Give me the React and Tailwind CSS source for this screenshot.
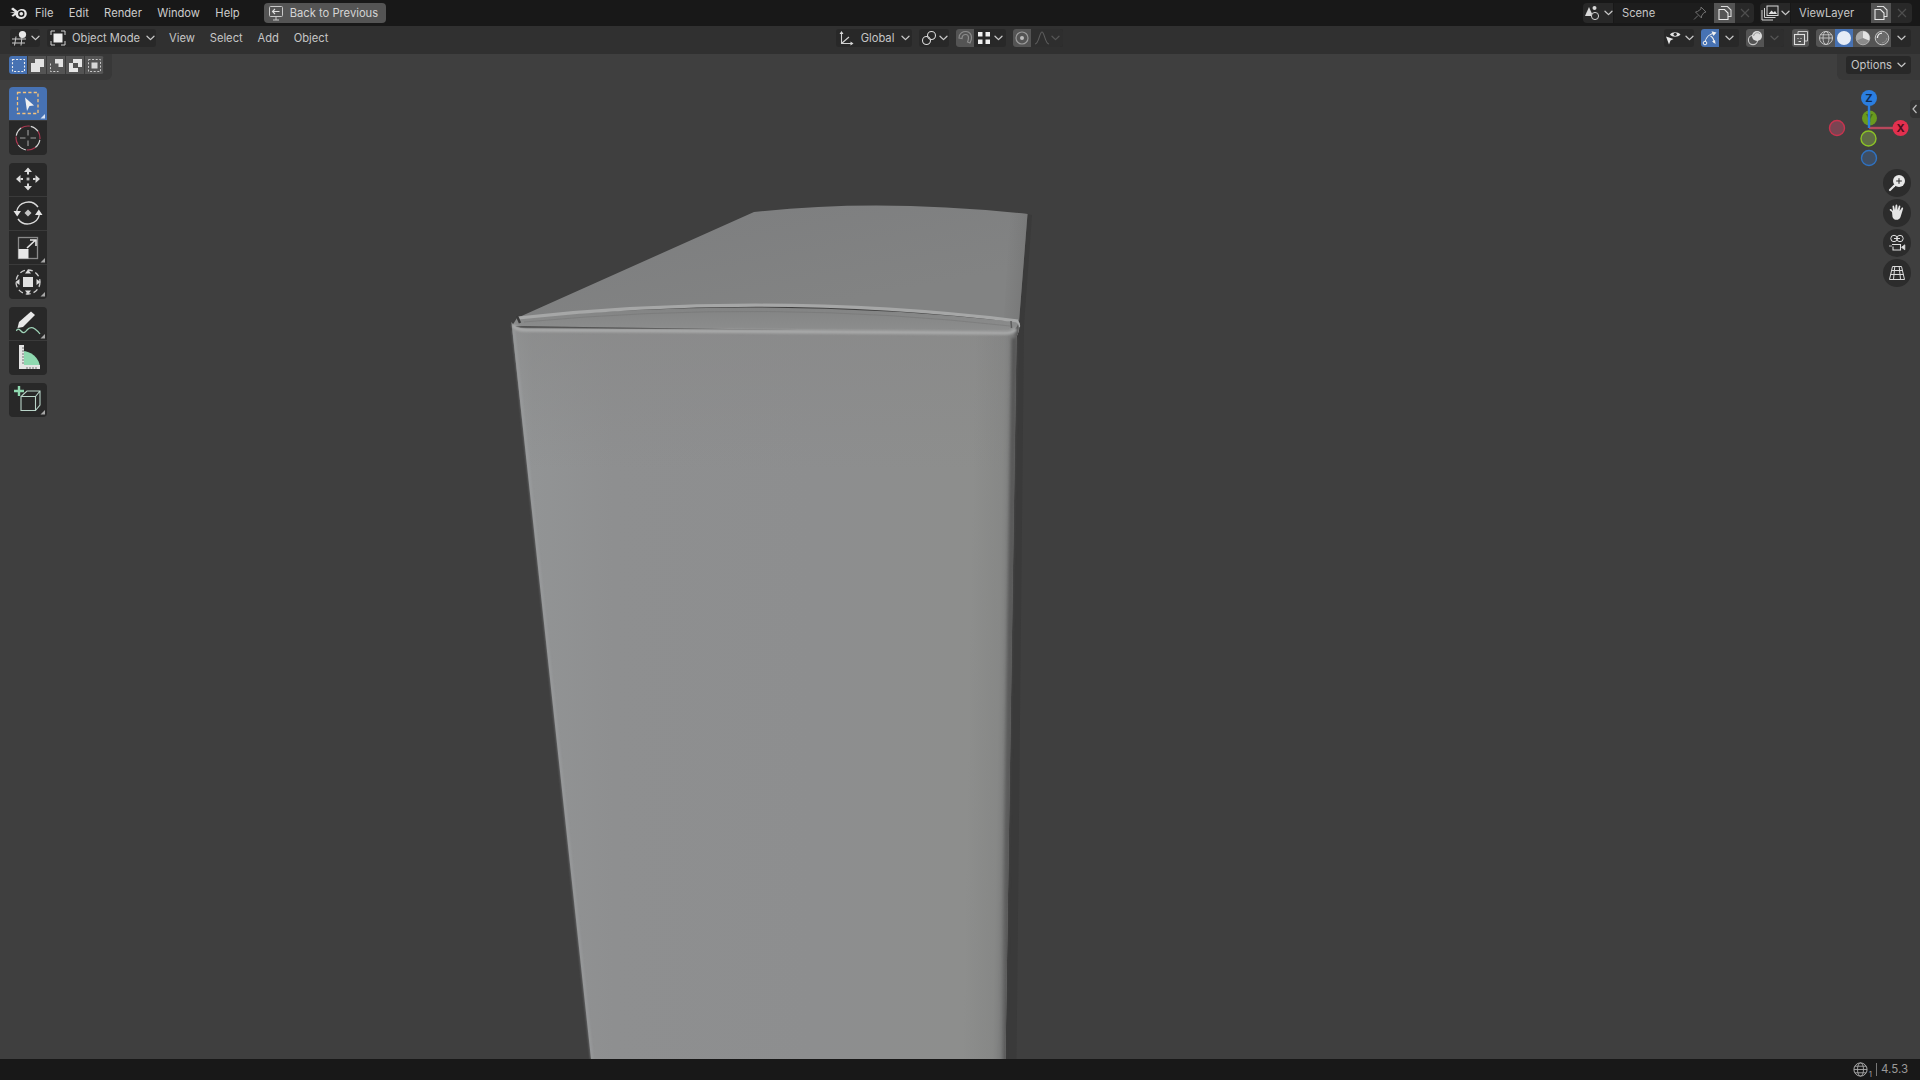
import React from "react";

const Chev = ({ c = "#c8c8c8", className = "" }) => (
  <svg width="9" height="6" viewBox="0 0 9 6" className={`shrink-0 ${className}`}>
    <path d="M1 1.2 L4.5 4.6 L8 1.2" fill="none" stroke={c} strokeWidth="1.3" strokeLinecap="round" strokeLinejoin="round" />
  </svg>
);

const T = ({ children }) => <span className="pt-[2px]">{children}</span>;

const Ic = ({ w = 16, h = 16, children }) => (
  <svg width={w} height={h} viewBox={`0 0 ${w} ${h}`} className="shrink-0">{children}</svg>
);

const BlenderLogo = () => (
  <Ic w={18} h={14}>
    <path d="M0.8 6.2 L6 6.2 L2 3 L4 1.6 L8.6 5 C10 3.6 11.6 3 13 3 C15.8 3 17.8 5 17.8 7.6 C17.8 10.6 15.4 13 12.2 13 C9.2 13 7 11.4 6.4 9 L4 10.8 L2.4 9.6 L5.4 7.4 Z" fill="#e6e6e6" />
    <circle cx="12.3" cy="7.8" r="3.2" fill="#181818" />
    <circle cx="12.3" cy="7.8" r="1.8" fill="#e6e6e6" />
  </Ic>
);

const BackIcon = () => (
  <Ic w={16} h={16}>
    <rect x="1.5" y="1.5" width="13" height="10" rx="1" fill="none" stroke="#c8c8c8" strokeWidth="1" />
    <path d="M5 15 H11 M8 11.5 V15" stroke="#c8c8c8" strokeWidth="1" />
    <path d="M11.5 6.5 H4.5 M7 4 L4.5 6.5 L7 9" fill="none" stroke="#e0e0e0" strokeWidth="1.1" />
  </Ic>
);

const EditorIcon = () => (
  <Ic w={18} h={16}>
    <path d="M1 9 H15 M1 13 H14 M5 6.5 L3.5 15.5 M11 7 L10 15.5" stroke="#c8c8c8" strokeWidth="1" />
    <circle cx="11.5" cy="4.5" r="3.6" fill="#e8e8e8" />
  </Ic>
);

const ModeIcon = () => (
  <Ic w={16} h={16}>
    <path d="M1 5 V1 H5 M11 1 H15 V5 M15 11 V15 H11 M5 15 H1 V11" fill="none" stroke="#d0d0d0" strokeWidth="1" />
    <rect x="3.5" y="3.5" width="9" height="9" fill="#eeeeee" />
  </Ic>
);

const GlobalIcon = () => (
  <Ic w={16} h={16}>
    <path d="M3.5 2.5 V13.5 H14 M3.5 13.5 L11 7" fill="none" stroke="#d0d0d0" strokeWidth="1.1" />
    <path d="M1.5 4 L3.5 1 L5.5 4 Z M12.5 11.5 L15.5 13.5 L12.5 15.5 Z" fill="#d8d8d8" />
  </Ic>
);

const LinkIcon = () => (
  <Ic w={16} h={16}>
    <circle cx="5.5" cy="10.5" r="4" fill="none" stroke="#d8d8d8" strokeWidth="1.1" />
    <circle cx="10.5" cy="5.5" r="4" fill="none" stroke="#d8d8d8" strokeWidth="1.1" />
  </Ic>
);

const MagnetIcon = () => (
  <Ic w={16} h={16}>
    <path d="M2 8 C2 3 6 1.5 9 1.5 C12.5 1.5 14.5 4.5 14.5 7.5 C14.5 9.5 14 11 13 13 L10.5 12 C11.2 10.5 11.5 9 11.5 7.5 C11.5 5.8 10.5 4.5 8.8 4.5 C6.5 4.5 5 6 5 8.5 Z" fill="none" stroke="#8c8c8c" strokeWidth="1.2" />
  </Ic>
);

const SnapIcon = () => (
  <Ic w={14} h={14}>
    <rect x="1" y="1" width="4.5" height="4.5" fill="#f0f0f0" />
    <rect x="8.5" y="1" width="4.5" height="4.5" fill="#f0f0f0" />
    <rect x="1" y="8.5" width="4.5" height="4.5" fill="#f0f0f0" />
    <rect x="8.5" y="8.5" width="4.5" height="4.5" fill="#f0f0f0" />
  </Ic>
);

const PropIcon = () => (
  <Ic w={16} h={16}>
    <circle cx="8" cy="8" r="6" fill="none" stroke="#9a9a9a" strokeWidth="1.2" />
    <circle cx="8" cy="8" r="2" fill="#bdbdbd" />
  </Ic>
);

const FalloffIcon = () => (
  <Ic w={16} h={16}>
    <path d="M1 14 C5 14 5.5 2 8 2 C10.5 2 11 14 15 14" fill="none" stroke="#5c5c5c" strokeWidth="1.1" />
  </Ic>
);

const SceneIcon = () => (
  <Ic w={18} h={16}>
    <path d="M5 2 L9 11 H1 Z" fill="#d8d8d8" />
    <circle cx="10.5" cy="3" r="2" fill="#d8d8d8" />
    <circle cx="11" cy="11" r="3.6" fill="#2a2a2a" stroke="#d0d0d0" strokeWidth="1" />
  </Ic>
);

const PinIcon = () => (
  <Ic w={14} h={14}>
    <path d="M8 1 L13 6 L11 6.5 L8.5 10 L8.5 12 L2.5 6 L4.5 5.5 L8 3 Z M5 9.5 L1 13.5" fill="none" stroke="#6f6f6f" strokeWidth="1" />
  </Ic>
);

const CopyIcon = () => (
  <Ic w={16} h={16}>
    <path d="M4.5 2 V1.5 H10.5 L14 5 V11.5 H11" fill="none" stroke="#dcdcdc" strokeWidth="1.1" />
    <path d="M2 4.5 H7.5 L11 8 V14.5 H2 Z" fill="none" stroke="#e8e8e8" strokeWidth="1.1" />
  </Ic>
);

const XIcon = () => (
  <Ic w={12} h={12}>
    <path d="M2 2 L10 10 M10 2 L2 10" stroke="#4e4e4e" strokeWidth="1.2" />
  </Ic>
);

const LayerIcon = () => (
  <Ic w={18} h={16}>
    <path d="M1 5 V15 H12 M3.5 3 V12.5 H14.5" fill="none" stroke="#d0d0d0" strokeWidth="1" />
    <rect x="6" y="1" width="11" height="9.5" fill="#2a2a2a" stroke="#d8d8d8" strokeWidth="1" />
    <path d="M7.5 9 L10.5 5.5 L12.5 7.5 L14 6 L16 9 Z" fill="#e0e0e0" />
  </Ic>
);

const EyeIcon = () => (
  <Ic w={20} h={16}>
    <path d="M6 4.5 C8 1.5 14 1.5 16.5 4.5 C14 7.5 8 7.5 6 4.5 Z" fill="#e4e4e4" />
    <circle cx="11.2" cy="4.3" r="1.6" fill="#2a2a2a" />
    <path d="M2 6.5 L9.5 9 L6.5 10.5 L5 14.5 Z" fill="#e8e8e8" />
  </Ic>
);

const GizmoToggleIcon = () => (
  <Ic w={16} h={16}>
    <path d="M3 12 C4 7 8 3.5 13 3.2" fill="none" stroke="#f0f0f0" strokeWidth="1.1" />
    <path d="M12 12.5 C12 9.5 11 7.5 8.5 6" fill="none" stroke="#f0f0f0" strokeWidth="1.1" />
    <circle cx="3" cy="13" r="1.8" fill="none" stroke="#f0f0f0" strokeWidth="1" />
    <path d="M9.5 1.2 L14.5 2.5 L11.5 6 Z M13 10 L10 11.5 L13.5 14 Z" fill="#f0f0f0" />
  </Ic>
);

const OverlayIcon = () => (
  <Ic w={16} h={16}>
    <circle cx="6" cy="10" r="4.6" fill="none" stroke="#c8c8c8" strokeWidth="1.1" />
    <circle cx="10" cy="6" r="5" fill="#dcdcdc" />
    <path d="M6.6 6 A3.6 3.6 0 0 1 13 4" fill="none" stroke="#888" strokeWidth="0.8" />
  </Ic>
);

const XrayIcon = () => (
  <Ic w={16} h={16}>
    <path d="M5 4 V1.5 H14.5 V11 H12" fill="none" stroke="#c8c8c8" strokeWidth="1" />
    <rect x="1.5" y="4.5" width="10" height="10" fill="none" stroke="#e0e0e0" strokeWidth="1.1" />
    <path d="M5 8 V9 M8 8 V9 M5.5 11.5 H8" stroke="#e0e0e0" strokeWidth="1" />
  </Ic>
);

const WireIcon = () => (
  <Ic w={16} h={16}>
    <circle cx="8" cy="8" r="6.5" fill="none" stroke="#c8c8c8" strokeWidth="1" />
    <ellipse cx="8" cy="8" rx="3" ry="6.5" fill="none" stroke="#c8c8c8" strokeWidth="0.9" />
    <path d="M1.5 8 H14.5 M2.6 4.8 H13.4" stroke="#c8c8c8" strokeWidth="0.9" />
  </Ic>
);

const SolidIcon = () => (
  <Ic w={16} h={16}>
    <circle cx="8" cy="8" r="7" fill="#e6ecf6" />
  </Ic>
);

const MatIcon = () => (
  <Ic w={16} h={16}>
    <circle cx="8" cy="8" r="6.8" fill="#8a8a8a" stroke="#bdbdbd" strokeWidth="0.8" />
    <path d="M8 1.2 V8 L14 10.6 A6.8 6.8 0 0 0 8 1.2 Z" fill="#e4e4e4" />
    <path d="M8 1.2 A6.8 6.8 0 0 0 1.8 10.6 L8 8 Z" fill="#a8a8a8" />
  </Ic>
);

const RenderIcon = () => (
  <Ic w={16} h={16}>
    <circle cx="8" cy="8" r="6.8" fill="#6a6a6a" stroke="#c4c4c4" strokeWidth="1" />
    <path d="M3.4 8 A4.8 4.8 0 0 1 8 3.2 M5 5" fill="none" stroke="#f0f0f0" strokeWidth="1.3" />
    <path d="M12.8 8 A4.8 4.8 0 0 1 8 12.8" fill="none" stroke="#8d8d8d" strokeWidth="1" />
  </Ic>
);

const Box = ({ w, className = "", children }) => (
  <div className={`h-[18px] flex items-center justify-center whitespace-nowrap ${w} ${className}`}>{children}</div>
);

const Seg = ({ children, className = "" }) => (
  <div className={`flex h-[18px] rounded-[3px] overflow-hidden bg-[#282828] ${className}`}>{children}</div>
);

const SelMode = ({ children, active }) => (
  <div className={`w-[19px] h-[18px] flex items-center justify-center ${active ? "bg-[#4772b3]" : "bg-[#545454]"} border-r border-[#3a3a3a]`}>
    <Ic w={15} h={15}>{children}</Ic>
  </div>
);

const Dash = "#ededed";

const SelectModes = () => (
  <div className="flex rounded-[3px] overflow-hidden w-fit">
    <SelMode active><rect x="1.5" y="1.5" width="12" height="12" fill="none" stroke={Dash} strokeWidth="1.1" strokeDasharray="2 1.6" /></SelMode>
    <SelMode><path d="M5 1 H14 V9 H10 V14 H1 V5 H5 Z" fill="#e2e2e2" /></SelMode>
    <SelMode>
      <path d="M6 1 H14 V9 H9.5 V5.5 H6 Z" fill="#e2e2e2" />
      <path d="M1.5 5.5 V13.5 H9.5" fill="none" stroke="#d0d0d0" strokeWidth="1" strokeDasharray="2 1.6" />
    </SelMode>
    <SelMode>
      <path d="M5 1 H14 V9 H10 V5 H5 Z M1 5 H5 V10 H10 V14 H1 Z" fill="#e6e6e6" />
    </SelMode>
    <SelMode>
      <rect x="1.5" y="1.5" width="12" height="12" fill="none" stroke="#c8c8c8" strokeWidth="1" strokeDasharray="2 1.6" />
      <rect x="4.5" y="4.5" width="6" height="6" fill="#d8d8d8" />
    </SelMode>
  </div>
);

const Corner = () => <path d="M36 27 V31.5 H31.5 Z" fill="#a8a8a8" />;

const Tool = ({ active, rounded = "", dy = 0, children }) => (
  <div className={`w-[38px] h-[34px] ${active ? "bg-[#4772b3]" : "bg-[#282828]"} ${rounded} border-b border-[#3a3a3a] last:border-b-0`}>
    <svg width="38" height="33" viewBox="0 0 38 33" className="block overflow-visible">
      <g transform={`translate(0,${dy})`}>{children}</g>
    </svg>
  </div>
);

const GREEN = "#8fd9b0";

const Toolbar = () => (
  <div className="absolute left-[9px] top-[33px] flex flex-col gap-[8px]">
    <div className="flex flex-col">
      <Tool active rounded="rounded-t-[4px]">
        <rect x="8.5" y="5.5" width="20.5" height="21" fill="none" stroke="#f4c27c" strokeWidth="1.3" strokeDasharray="3.2 2.2" />
        <path d="M16 10.5 L25 18.5 L20.5 19 L18 24 Z" fill="#f0f0f0" />
        <path d="M36 27 V31.5 H31.5 Z" fill="#d8e2f2" />
      </Tool>
      <Tool rounded="rounded-b-[4px]">
        <circle cx="19" cy="17" r="12" fill="none" stroke="#d8d8d8" strokeWidth="1.2" strokeDasharray="9 10" strokeDashoffset="-2" />
        <circle cx="19" cy="17" r="12" fill="none" stroke="#a83850" strokeWidth="1.2" strokeDasharray="9 10" strokeDashoffset="-11" />
        <path d="M19 9 V14.5 M19 19.5 V25 M11 17 H16.5 M21.5 17 H27" stroke="#a0a0a0" strokeWidth="1.1" />
      </Tool>
    </div>
    <div className="flex flex-col">
      <Tool rounded="rounded-t-[4px]" dy={-1}>
        <path d="M19 5.5 L23 10 H15 Z M19 28.5 L23 24 H15 Z M7 17 L11.5 13 V21 Z M31 17 L26.5 13 V21 Z" fill="#dcdcdc" />
        <path d="M19 10 V12.5 M19 21.5 V24 M11.5 17 H14 M24 17 H26.5" stroke="#dcdcdc" strokeWidth="2" />
        <rect x="17.6" y="15.6" width="2.8" height="2.8" fill="#b8b8b8" />
      </Tool>
      <Tool dy={-1}>
        <path d="M7.5 16 A12 12 0 0 1 29 11" fill="none" stroke="#dcdcdc" strokeWidth="1.4" />
        <path d="M30.5 18 A12 12 0 0 1 9 23" fill="none" stroke="#dcdcdc" strokeWidth="1.4" />
        <path d="M4.5 15 H12 L8.2 20.5 Z M26 19 H33.5 L29.8 13.5 Z" fill="#e4e4e4" />
        <path d="M19 13.5 L22.5 17 L19 20.5 L15.5 17 Z" fill="#c4c4c4" />
      </Tool>
      <Tool>
        <rect x="9.5" y="6.5" width="19" height="21" fill="none" stroke="#8a8a8a" strokeWidth="1.3" />
        <rect x="9.5" y="18" width="10" height="9.5" fill="#e8e8e8" />
        <path d="M18 17 L26 9.5 M21 9 H27 V15" fill="none" stroke="#e4e4e4" strokeWidth="1.6" />
        <Corner />
      </Tool>
      <Tool rounded="rounded-b-[4px]">
        <circle cx="19" cy="17" r="12" fill="none" stroke="#cfcfcf" strokeWidth="1.3" strokeDasharray="5 3" />
        <rect x="14" y="12" width="10" height="10" fill="#e0e0e0" />
        <path d="M19 4.5 L22 8.5 H16 Z M19 29.5 L22 25.5 H16 Z M6.5 17 L10.5 14 V20 Z M31.5 17 L27.5 14 V20 Z" fill="#dcdcdc" />
        <Corner />
      </Tool>
    </div>
    <div className="flex flex-col">
      <Tool rounded="rounded-t-[4px]">
        <path d="M10 15 L22 4.5 L26 8 L14 20 L8.5 21 Z" fill="#e8e8e8" />
        <path d="M7.5 24 C8 21.5 10 21.5 12 24 C14 26.5 16 26 18 23 C20 20.5 23 20 26 22 C28 23.5 30 25.5 31 27" fill="none" stroke="#9fd4b8" strokeWidth="1.3" />
        <Corner />
      </Tool>
      <Tool rounded="rounded-b-[4px]" dy={-1}>
        <path d="M13 11 A18 18 0 0 1 31 27 H13 Z" fill={GREEN} />
        <rect x="10" y="5" width="5" height="24" fill="#e4e4e4" />
        <rect x="10" y="25" width="21" height="4" fill="#e4e4e4" />
        <path d="M13 8 H15 M13 11 H15 M13 14 H15 M13 17 H15 M13 20 H15 M13 23 H15" stroke="#555" strokeWidth="0.8" />
        <path d="M18 27 V29 M21 27 V29 M24 27 V29 M27 27 V29" stroke="#555" strokeWidth="0.8" />
      </Tool>
    </div>
    <div className="flex flex-col">
      <Tool rounded="rounded-[4px]">
        <path d="M10 3 V13 M5 8 H15" stroke={GREEN} strokeWidth="2.4" />
        <path d="M12 13.5 H26.5 V27.5 H12 Z M12.5 13 L18 8 H31 V22 L26.5 27.5 M26.5 13.5 L31 8" fill="none" stroke="#b9d4c8" strokeWidth="1.1" />
        <Corner />
      </Tool>
    </div>
  </div>
);

const NavBtn = ({ children }) => (
  <div className="w-[28px] h-[28px] rounded-full bg-[#2c2c2c] flex items-center justify-center">
    <Ic w={18} h={18}>{children}</Ic>
  </div>
);

const NavGizmo = () => (
  <div className="absolute left-[1883px] top-[115px] flex flex-col gap-[2px]">
    <NavBtn>
      <circle cx="11" cy="7" r="6" fill="#e8e8e8" />
      <path d="M8.2 7 H13.8 M11 4.2 V9.8" stroke="#2c2c2c" strokeWidth="1.1" />
      <path d="M6.5 11.5 L2 16" stroke="#e8e8e8" strokeWidth="2.2" strokeLinecap="round" />
    </NavBtn>
    <NavBtn>
      <path d="M4 8 L2 6.5 C1 5.5 2.5 4.5 3.5 5.5 L5 7 L4.5 2.5 C4.5 1.3 6 1.3 6.2 2.5 L7 6 L7.5 1.5 C7.7 0.3 9.3 0.3 9.3 1.5 L9.5 6 L10.8 2 C11.2 1 12.6 1.4 12.3 2.6 L11.6 7 L13.6 4 C14.4 3 15.6 3.8 15 5 L12.5 13 C11.5 16.5 6 17 4.5 13 Z" fill="#e4e4e4" />
    </NavBtn>
    <NavBtn>
      <circle cx="6" cy="4.5" r="3.2" fill="none" stroke="#e0e0e0" strokeWidth="1" />
      <path d="M6 4.5 H12" stroke="#e0e0e0" strokeWidth="1" />
      <circle cx="12" cy="4.5" r="3.2" fill="none" stroke="#e0e0e0" strokeWidth="1" />
      <path d="M4 10.5 H12.5 V16 H5 V12.5" fill="none" stroke="#e0e0e0" strokeWidth="1.1" />
      <path d="M16.8 10.8 V15.8 L13.5 13.3 Z M1 12 H4" fill="#e0e0e0" stroke="#e0e0e0" strokeWidth="0.8" />
    </NavBtn>
    <NavBtn>
      <path d="M4.5 2.5 H13.5 L16.5 15.5 H1.5 Z M6.8 2.5 L5.5 15.5 M11.2 2.5 L12.5 15.5 M3.6 6.5 H14.4 M2.6 10.5 H15.4" fill="none" stroke="#dcdcdc" strokeWidth="1" />
    </NavBtn>
  </div>
);

const OrientGizmo = () => (
  <svg className="absolute left-[1820px] top-[26px]" width="100" height="100" viewBox="0 0 100 100">
    <g transform="translate(-1820,-80)">
      <circle cx="1837" cy="128" r="7.5" fill="#7a4452" stroke="#c8344f" strokeWidth="1.4" />
      <circle cx="1869" cy="158" r="7.5" fill="#3f4e62" stroke="#2f72c2" strokeWidth="1.4" />
      <circle cx="1869.5" cy="118" r="7.5" fill="#6a9a1e" />
      <text x="1869.5" y="121.5" textAnchor="middle" fontSize="10" fontWeight="700" fill="#4a6d14" fontFamily="Inter, sans-serif">Y</text>
      <path d="M1869 128 H1895" stroke="#b8485c" strokeWidth="2.4" />
      <path d="M1869 128 V104" stroke="#2b7ee0" strokeWidth="2.4" />
      <circle cx="1868.5" cy="138.5" r="7.5" fill="#5f6d46" stroke="#8cc326" strokeWidth="1.4" />
      <circle cx="1900.5" cy="128" r="8" fill="#e2304f" />
      <text x="1900.5" y="132" textAnchor="middle" fontSize="11" fontWeight="700" fill="#4a0e1c" fontFamily="Inter, sans-serif">X</text>
      <circle cx="1869" cy="98" r="8" fill="#2b7ee0" />
      <text x="1869" y="102" textAnchor="middle" fontSize="11" fontWeight="700" fill="#0e2c52" fontFamily="Inter, sans-serif">Z</text>
    </g>
  </svg>
);

const FRONT = "M511.5 322 Q513 328 526 328.5 L1006 331 Q1016 331.5 1018 324 Q1020 330 1016.5 337 L1005.5 1059 L591 1059 Z";

const Mesh = () => (
  <svg className="absolute inset-0" width="1920" height="1005" viewBox="0 54 1920 1005">
    <defs>
      <linearGradient id="frontH" gradientUnits="userSpaceOnUse" x1="512" y1="0" x2="1018" y2="0">
        <stop offset="0" stopColor="#9a9d9e" />
        <stop offset="0.04" stopColor="#929495" />
        <stop offset="0.2" stopColor="#8e8f90" />
        <stop offset="0.6" stopColor="#8d8e8f" />
        <stop offset="1" stopColor="#8d8e8c" />
      </linearGradient>
      <linearGradient id="frontV" gradientUnits="userSpaceOnUse" x1="0" y1="330" x2="0" y2="470">
        <stop offset="0" stopColor="#888888" stopOpacity="0.6" />
        <stop offset="1" stopColor="#888888" stopOpacity="0" />
      </linearGradient>
      <linearGradient id="edgeR" gradientUnits="userSpaceOnUse" x1="975" y1="340" x2="1017" y2="340.7">
        <stop offset="0" stopColor="#767777" stopOpacity="0" />
        <stop offset="0.7" stopColor="#787979" stopOpacity="0.3" />
        <stop offset="0.9" stopColor="#747575" stopOpacity="0.7" />
        <stop offset="1" stopColor="#5a5a5a" stopOpacity="1" />
      </linearGradient>
      <linearGradient id="edgeFade" gradientUnits="userSpaceOnUse" x1="0" y1="330" x2="0" y2="1059">
        <stop offset="0" stopColor="#525252" stopOpacity="0.9" />
        <stop offset="0.7" stopColor="#525252" stopOpacity="0.65" />
        <stop offset="1" stopColor="#525252" stopOpacity="0.15" />
      </linearGradient>
      <linearGradient id="topF" gradientUnits="userSpaceOnUse" x1="780" y1="205" x2="800" y2="310">
        <stop offset="0" stopColor="#7e7f80" />
        <stop offset="1" stopColor="#828383" />
      </linearGradient>
      <linearGradient id="topR" gradientUnits="userSpaceOnUse" x1="1005" y1="260" x2="1026" y2="262">
        <stop offset="0" stopColor="#6e6e6e" stopOpacity="0" />
        <stop offset="1" stopColor="#6a6a6a" stopOpacity="0.4" />
      </linearGradient>
      <linearGradient id="lip" gradientUnits="userSpaceOnUse" x1="0" y1="306" x2="0" y2="330">
        <stop offset="0" stopColor="#828383" />
        <stop offset="1" stopColor="#8c8d8d" />
      </linearGradient>
    </defs>

    <path d="M1027.5 214 L1032 215 L1024 325 L1016.5 1059 L1005 1059 L1016 335 L1019 322 Z" fill="#3a3a3a" />

    <path d="M517 318 L754 212 Q880 198 1027.5 214 L1019 322 Q780 292 517 318 Z" fill="url(#topF)" />
    <path d="M1027.5 214 L1019 322 L1004 318 L1010 212 Z" fill="url(#topR)" />
    <path d="M517 318 Q765 295 1018 322 Q1021 326 1018 333 L512 326 Z" fill="url(#lip)" />
    <g className="blur-[0.7px]">
      <path d="M518 318 Q770 291 1018 321" fill="none" stroke="#a6a7a7" strokeWidth="3.2" />
      <path d="M524 322 Q770 299 1010 326" fill="none" stroke="#6e6f6f" strokeWidth="0.8" opacity="0.5" />
    </g>
    <path d="M517 316 L520 323" stroke="#3a3a3a" strokeWidth="2.4" />
    <path d="M1011 321 L1011.5 328" stroke="#5c5c5c" strokeWidth="1.5" />
    <path d="M1013 320 Q1020 321 1019 327" fill="none" stroke="#a8a9a9" strokeWidth="2" />

    <path d={FRONT} fill="url(#frontH)" />
    <path d={FRONT} fill="url(#frontV)" />
    <path d={FRONT} fill="url(#edgeR)" />
    <g className="blur-[1.5px]">
      <path d="M1014 338 L1003 1059" fill="none" stroke="url(#edgeFade)" strokeWidth="5" />
    </g>
    <g className="blur-[1px]">
      <path d="M513 325 Q515 330 527 330 L1006 333 Q1012 333 1016 329" fill="none" stroke="#a9aaaa" strokeWidth="3.4" />
      <path d="M513.5 330 L592 1059" fill="none" stroke="#9fa2a3" strokeWidth="3" opacity="0.5" />
    </g>
  </svg>
);

export default function App() {
  const font = { fontFamily: "Inter, 'Noto Sans', sans-serif" };
  return (
    <div className="w-[1920px] h-[1080px] flex flex-col overflow-hidden bg-[#3f3f3f] text-[11.2px] leading-none text-[#c6c6c6]" style={font}>
      <div className="h-[26px] shrink-0 bg-[#181818] flex items-center pl-[9px] pr-[8px]">
        <BlenderLogo />
        <div className="flex gap-[15.3px] ml-[8px] text-[#cccccc] whitespace-nowrap">
          <T>File</T><T>Edit</T><T>Render</T><T>Window</T><T>Help</T>
        </div>
        <div className="ml-[24px] w-[122px] h-[20px] rounded-[4px] bg-[#545454] flex items-center pl-[4px] gap-[6px] text-[#d4d4d4] whitespace-nowrap">
          <BackIcon /><T>Back to Previous</T>
        </div>
        <div className="ml-auto flex gap-[6px]">
          <div className="flex h-[20px] rounded-[4px] overflow-hidden bg-[#282828]">
            <div className="w-[31px] flex items-center justify-center gap-[2px] border-r border-[#181818]"><SceneIcon /><Chev /></div>
            <div className="w-[100px] bg-[#1d1d1d] flex items-center justify-between pl-[8px] pr-[7px]"><T>Scene</T><PinIcon /></div>
            <div className="w-[21px] bg-[#545454] flex items-center justify-center"><CopyIcon /></div>
            <div className="w-[19px] flex items-center justify-center"><XIcon /></div>
          </div>
          <div className="flex h-[20px] rounded-[4px] overflow-hidden bg-[#282828]">
            <div className="w-[31px] flex items-center justify-center gap-[2px] border-r border-[#181818]"><LayerIcon /><Chev /></div>
            <div className="w-[80px] bg-[#1d1d1d] flex items-center pl-[8px]"><T>ViewLayer</T></div>
            <div className="w-[20px] bg-[#545454] flex items-center justify-center"><CopyIcon /></div>
            <div className="w-[21px] flex items-center justify-center"><XIcon /></div>
          </div>
        </div>
      </div>

      <div className="h-[28px] shrink-0 bg-[#303030] flex items-start pt-[3px]">
        <div className="w-[836px] h-[18px] shrink-0 flex items-center pl-[10px]">
          <Seg><Box w="w-[30px]" className="gap-[2px]"><EditorIcon /><Chev /></Box></Seg>
          <Seg className="ml-[7px]">
            <Box w="w-[109px]" className="gap-[6px] justify-start pl-[3px]"><ModeIcon /><T>Object Mode</T><Chev /></Box>
          </Seg>
          <div className="flex gap-[14.8px] ml-[13px] whitespace-nowrap"><T>View</T><T>Select</T><T>Add</T><T>Object</T></div>
        </div>
        <Seg><Box w="w-[76px]" className="gap-[7px]"><GlobalIcon /><T>Global</T><Chev /></Box></Seg>
        <Seg className="ml-[7px]"><Box w="w-[30px]" className="gap-[2px]"><LinkIcon /><Chev /></Box></Seg>
        <Seg className="ml-[7px]">
          <Box w="w-[18px]" className="bg-[#545454]"><MagnetIcon /></Box>
          <Box w="w-[32px]" className="gap-[3px]"><SnapIcon /><Chev /></Box>
        </Seg>
        <Seg className="ml-[7px]">
          <Box w="w-[18px]" className="bg-[#545454]"><PropIcon /></Box>
          <Box w="w-[32px]" className="gap-[1px] bg-[#2e2e2e]"><FalloffIcon /><Chev c="#555555" /></Box>
        </Seg>
        <div className="ml-auto flex items-center pr-[9px]">
          <Seg><Box w="w-[30px]" className="gap-[1px]"><EyeIcon /><Chev /></Box></Seg>
          <Seg className="ml-[7px]">
            <Box w="w-[18px]" className="bg-[#4772b3]"><GizmoToggleIcon /></Box>
            <Box w="w-[20px]"><Chev /></Box>
          </Seg>
          <Seg className="ml-[7px]">
            <Box w="w-[18px]" className="bg-[#545454]"><OverlayIcon /></Box>
            <Box w="w-[20px]" className="bg-[#2e2e2e]"><Chev c="#555555" /></Box>
          </Seg>
          <Seg className="ml-[8px]"><Box w="w-[17px]" className="bg-[#545454]"><XrayIcon /></Box></Seg>
          <Seg className="ml-[7px]">
            <Box w="w-[19px]" className="bg-[#545454]"><WireIcon /></Box>
            <Box w="w-[18px]" className="bg-[#4772b3]"><SolidIcon /></Box>
            <Box w="w-[19px]" className="bg-[#545454]"><MatIcon /></Box>
            <Box w="w-[19px]" className="bg-[#545454]"><RenderIcon /></Box>
            <Box w="w-[20px]"><Chev /></Box>
          </Seg>
        </div>
      </div>

      <div className="relative flex-1 bg-[#3f3f3f]">
        <Mesh />
        <div className="absolute left-0 top-0 w-[112px] h-[26px] bg-[#383838] rounded-br-[6px] pl-[9px] pt-[2px]">
          <SelectModes />
        </div>
        <div className="absolute right-0 top-0 w-[83px] h-[26px] bg-[#383838] rounded-bl-[6px] pl-[9px] pt-[2px]">
          <Seg className="w-[65px]">
            <Box w="w-[65px]" className="gap-[5px]"><T>Options</T><Chev /></Box>
          </Seg>
        </div>
        <Toolbar />
        <OrientGizmo />
        <NavGizmo />
        <div className="absolute right-0 top-[46px] w-[10px] h-[18px] rounded-l-[4px] bg-[#333333] flex items-center justify-center">
          <svg width="6" height="10" viewBox="0 0 6 10"><path d="M4.5 1 L1 5 L4.5 9" fill="none" stroke="#bdbdbd" strokeWidth="1.2" /></svg>
        </div>
      </div>

      <div className="h-[21px] shrink-0 bg-[#181818] flex items-center justify-end pr-[12px] text-[#9a9a9a] text-[11.5px]">
        <div className="mr-[1px]">
          <Ic w={15} h={15}>
            <circle cx="7.5" cy="7.5" r="6.6" fill="none" stroke="#a8a8a8" strokeWidth="1" />
            <ellipse cx="7.5" cy="7.5" rx="3" ry="6.6" fill="none" stroke="#a8a8a8" strokeWidth="0.9" />
            <path d="M1 7.5 H14 M2 4.2 H13 M2 10.8 H13" stroke="#a8a8a8" strokeWidth="0.9" />
          </Ic>
        </div>
        <span className="text-[8px] self-end mb-[2px] mr-[4px]">1</span>
        <span className="w-px h-[13px] bg-[#777777] mr-[4px]"></span>
        <span>4.5.3</span>
      </div>
    </div>
  );
}
